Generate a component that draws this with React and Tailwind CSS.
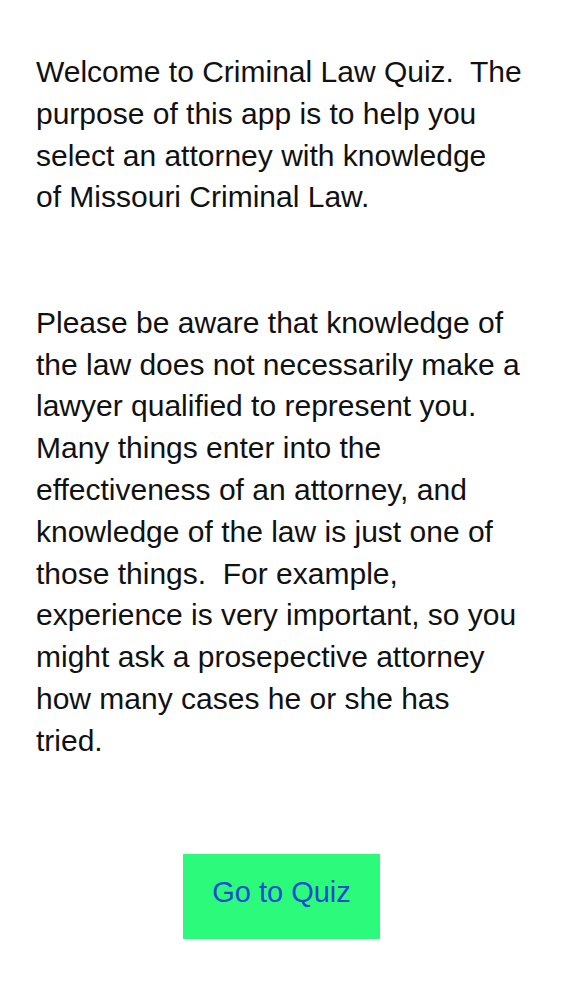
export default function App() {
  const p1 = [
    "Welcome to Criminal Law Quiz.  The",
    "purpose of this app is to help you",
    "select an attorney with knowledge",
    "of Missouri Criminal Law.",
  ];
  const p2 = [
    "Please be aware that knowledge of",
    "the law does not necessarily make a",
    "lawyer qualified to represent you.",
    "Many things enter into the",
    "effectiveness of an attorney, and",
    "knowledge of the law is just one of",
    "those things.  For example,",
    "experience is very important, so you",
    "might ask a prosepective attorney",
    "how many cases he or she has",
    "tried.",
  ];
  return (
    <div className="min-h-[1000px] w-full bg-white" style={{ fontFamily: '"Liberation Sans", Arial, sans-serif' }}>
      <div className="pl-[36px] pt-[51px] text-[30px] leading-[41.8px] text-[#111111]">
        {p1.map((l, i) => (
          <div key={i} className="whitespace-pre">{l}</div>
        ))}
        <div className="h-[83.6px]" />
        {p2.map((l, i) => (
          <div key={i} className="whitespace-pre">{l}</div>
        ))}
      </div>
      <div className="mt-[92px] flex justify-center">
        <button className="flex h-[85px] w-[197px] items-center justify-center bg-[#2cfa7b] pb-[6px] text-[29px] text-[#1a4bd6]">
          Go to Quiz
        </button>
      </div>
    </div>
  );
}
